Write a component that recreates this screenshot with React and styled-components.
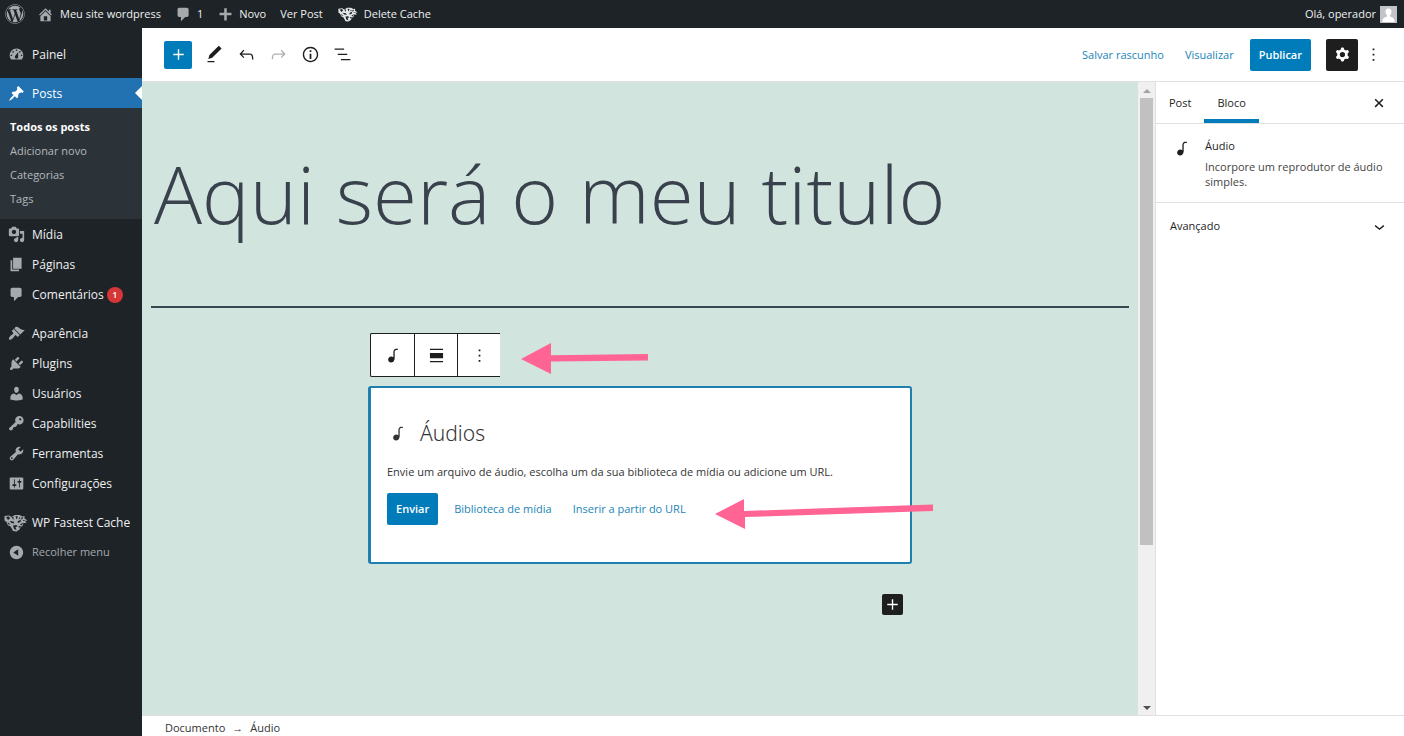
import React from "react";
import styled, { createGlobalStyle } from "styled-components";
import { FaWordpress } from "react-icons/fa";

const Global = createGlobalStyle`
  * { box-sizing: border-box; }
  body { margin: 0; background: #fff; color: #1e1e1e; font: 11px/16px "Open Sans", "Liberation Sans", sans-serif; }
  button, input { font: inherit; color: inherit; }
  button { border: 0; background: none; padding: 0; cursor: pointer; }
  a { color: inherit; text-decoration: none; }
  ul { list-style: none; margin: 0; padding: 0; }
  p, h1, h2 { margin: 0; font-weight: 400; }
  svg { display: block; flex: none; fill: currentColor; }
`;

const Page = styled.div`
  min-height: 100vh;
  display: flex;
  flex-direction: column;
`;

const AdminBar = styled.header`
  display: flex;
  align-items: center;
  height: 28px;
  padding: 0 7px 0 5px;
  background: #1d2327;
  color: #f0f0f1;
`;

const BarLink = styled.a`
  display: flex;
  align-items: center;
  gap: ${(p) => p.$gap || 6}px;
  margin-right: ${(p) => p.$after || 14}px;
  svg { color: ${(p) => (p.$bright ? "#e4e5e6" : "#a7aaad")}; }
`;

const Account = styled(BarLink)`
  margin: 0 0 0 auto;
  gap: 4px;
`;

const Avatar = styled.svg`
  background: #c3c4c7;
  && { color: #fff; }
`;

const Shell = styled.div`
  flex: 1;
  display: flex;
`;

const Sidebar = styled.nav`
  flex: none;
  width: 142px;
  padding-top: 11px;
  background: #1d2327;
  color: #f0f0f1;
  font-size: 12px;
`;

const MenuLink = styled.a`
  position: relative;
  display: flex;
  align-items: center;
  gap: ${(p) => (p.$wide ? 4 : 7)}px;
  height: 30px;
  padding: 1px 0 0 ${(p) => (p.$wide ? 4 : 8)}px;
  white-space: nowrap;
  background: ${(p) => (p.$current ? "#2271b1" : "none")};
  color: ${(p) => (p.$current ? "#fff" : "inherit")};
  svg { color: ${(p) => (p.$current ? "#fff" : "#a7aaad")}; }
  &::after {
    content: "";
    display: ${(p) => (p.$current ? "block" : "none")};
    position: absolute;
    right: 0;
    top: 8px;
    border: 7px solid transparent;
    border-left: 0;
    border-right-color: #fff;
  }
`;

const Collapse = styled.button`
  display: flex;
  align-items: center;
  gap: 7px;
  height: 30px;
  padding-left: 8px;
  font-size: 11px;
  color: #a7aaad;
`;

const MenuGap = styled.li`
  height: 9px;
`;

const SubMenu = styled.ul`
  padding: 7px 0 8px;
  background: #2c3338;
  font-size: 11px;
  color: #b4b9be;
`;

const SubLink = styled.a`
  display: block;
  padding-left: 10px;
  line-height: 24px;
  font-weight: ${(p) => (p.$current ? 700 : 400)};
  color: ${(p) => (p.$current ? "#fff" : "inherit")};
`;

const Count = styled.span`
  width: 16px;
  height: 16px;
  margin-left: -4px;
  border-radius: 8px;
  background: #d63638;
  color: #fff;
  font-size: 9px;
  font-weight: 600;
  text-align: center;
`;

const Editor = styled.div`
  flex: 1;
  min-width: 0;
  display: flex;
  flex-direction: column;
`;

const Header = styled.div`
  display: flex;
  align-items: center;
  justify-content: space-between;
  height: 54px;
  padding: 0 20px 0 22px;
  border-bottom: 1px solid #e0e0e0;
`;

const Tools = styled.div`
  display: flex;
  align-items: center;
  gap: 4px;
`;

const Tool = styled.button`
  display: grid;
  place-items: center;
  width: 28px;
  height: 28px;
  color: #1e1e1e;
  &:disabled { color: #b0b0b0; }
`;

const Inserter = styled(Tool)`
  margin-right: 4px;
  border-radius: 2px;
  background: #007cba;
  color: #fff;
`;

const Actions = styled.div`
  display: flex;
  align-items: center;
`;

const TextButton = styled.button`
  margin-right: ${(p) => p.$after || 21}px;
  color: #1a85b8;
`;

const Primary = styled.button`
  height: 32px;
  padding: 0 9px;
  border-radius: 2px;
  background: #007cba;
  color: #fff;
  font-weight: 600;
`;

const SettingsToggle = styled.button`
  display: grid;
  place-items: center;
  width: 32px;
  height: 32px;
  margin: 0 5px 0 15px;
  border-radius: 2px;
  background: #1e1e1e;
  color: #fff;
`;

const MoreButton = styled.button`
  display: grid;
  place-items: center;
  width: 21px;
  height: 28px;
`;

const Body = styled.div`
  flex: 1;
  display: flex;
`;

const Canvas = styled.main`
  flex: 1;
  min-width: 0;
  padding: 0 9px;
  background: #d1e4dd;
`;

const Title = styled.input`
  display: block;
  width: 100%;
  height: 226px;
  padding: 0 3px 4px;
  border: 0;
  border-bottom: 2px solid #39474f;
  border-radius: 0;
  outline: 0;
  background: none;
  && {
    color: #39414d;
    font-size: 80px;
    font-weight: 300;
  }
`;

const Column = styled.div`
  position: relative;
  max-width: 544px;
  margin: 25px auto 0;
`;

const BlockToolbar = styled.div`
  display: flex;
  width: max-content;
  margin-left: 2px;
  border: 1px solid #1e1e1e;
  border-right: 0;
  border-radius: 2px 0 0 2px;
  background: #fff;
`;

const BlockTool = styled.button`
  display: grid;
  place-items: center;
  width: 43px;
  height: 42px;
  & + & { border-left: 1px solid #1e1e1e; }
`;

const Placeholder = styled.section`
  margin-top: 9px;
  min-height: 178px;
  padding: 29px 16px 34px;
  border: 2px solid #1f80b0;
  border-left-width: 3px;
  border-radius: 3px;
  background: #fff;
`;

const PlaceholderTitle = styled.h2`
  display: flex;
  align-items: center;
  gap: 12px;
  color: #333;
  font: 300 21px/32px "Noto Sans", sans-serif;
`;

const Hint = styled.p`
  margin: 15px 0 13px;
  color: #333;
`;

const Row = styled.div`
  display: flex;
  align-items: center;
  gap: 16px;
`;

const Appender = styled.button`
  display: grid;
  place-items: center;
  width: 21px;
  height: 21px;
  margin: 30px 9px 0 auto;
  border-radius: 2px;
  background: #1e1e1e;
  color: #fff;
`;

const Annotation = styled.svg`
  position: absolute;
  left: ${(p) => p.$x}px;
  top: ${(p) => p.$y}px;
  color: #ff6494;
  pointer-events: none;
`;

const ScrollTrack = styled.div`
  flex: none;
  display: flex;
  flex-direction: column;
  align-items: center;
  justify-content: space-between;
  width: 17px;
  padding: 7px 0 5px;
  background: #f0f0f0;
`;

const ScrollThumb = styled.div`
  flex: 0 0 72%;
  width: 13px;
  margin: 5px 0 auto;
  background: #c1c1c1;
`;

const ScrollArrow = styled.span`
  border: 4px solid transparent;
  border-top-width: ${(p) => (p.$up ? 0 : 4)}px;
  border-bottom-width: ${(p) => (p.$up ? 4 : 0)}px;
  border-top-color: #505050;
  border-bottom-color: #a3a3a3;
`;

const Panel = styled.aside`
  flex: none;
  width: 249px;
  border-left: 1px solid #e0e0e0;
`;

const Tabs = styled.div`
  display: flex;
  align-items: center;
  height: 42px;
  padding-right: 18px;
  border-bottom: 1px solid #e0e0e0;
`;

const Tab = styled.button`
  align-self: stretch;
  padding: 0 13px;
  box-shadow: ${(p) => (p.$active ? "inset 0 -4px #007cba" : "none")};
`;

const CloseButton = styled.button`
  margin-left: auto;
`;

const BlockCard = styled.div`
  display: flex;
  gap: 13px;
  padding: 14px 14px 13px 15px;
  border-bottom: 1px solid #e0e0e0;
`;

const CardTitle = styled.h2`
  margin-bottom: 5px;
  font-size: 11px;
  line-height: 16px;
`;

const CardText = styled.p`
  color: #444;
  line-height: 15px;
`;

const PanelToggle = styled.button`
  display: flex;
  align-items: center;
  justify-content: space-between;
  width: 100%;
  height: 46px;
  padding: 0 14px;
`;

const Footer = styled.footer`
  display: flex;
  align-items: center;
  gap: 7px;
  height: 21px;
  padding: 4px 23px 0;
  border-top: 1px solid #e0e0e0;
  color: #333;
`;

const dash = {
  dashboard: "M3.76 16h12.48c1.1-1.37 1.76-3.11 1.76-5 0-4.42-3.58-8-8-8s-8 3.58-8 8c0 1.89.66 3.63 1.76 5zM10 4c.55 0 1 .45 1 1s-.45 1-1 1-1-.45-1-1 .45-1 1-1zM6 6c.55 0 1 .45 1 1s-.45 1-1 1-1-.45-1-1 .45-1 1-1zm8 0c.55 0 1 .45 1 1s-.45 1-1 1-1-.45-1-1 .45-1 1-1zm-5.37 5.55L12 7v6c0 1.1-.9 2-2 2s-2-.9-2-2c0-.57.24-1.08.63-1.45zM4 10c.55 0 1 .45 1 1s-.45 1-1 1-1-.45-1-1 .45-1 1-1zm12 0c.55 0 1 .45 1 1s-.45 1-1 1-1-.45-1-1 .45-1 1-1z",
  pin: "M10.44 3.02l1.82-1.82 6.36 6.35-1.83 1.82c-1.05-.68-2.48-.57-3.41.36l-.75.75c-.92.93-1.04 2.35-.35 3.41l-1.83 1.82-2.41-2.41-2.8 2.79c-.42.42-3.38 2.71-3.8 2.29s1.86-3.39 2.28-3.81l2.79-2.79L4.1 9.36l1.83-1.82c1.05.69 2.48.57 3.4-.36l.75-.75c.93-.92 1.05-2.35.36-3.41z",
  home: "M16 8.5l1.53 1.53-1.06 1.06L10 4.6l-6.47 6.49-1.06-1.06L10 2.5l4 4v-2h2v4zm-6-2.46l6 5.99V18H4v-5.97zM12 17v-5H8v5h4z",
  comments: "M5 2h9c1.1 0 2 .9 2 2v7c0 1.1-.9 2-2 2h-2l-5 5v-5H5c-1.1 0-2-.9-2-2V4c0-1.1.9-2 2-2z",
  plus: "M17 8v3h-5.500v6h-3v-6H3V8h5.500V2.500h3V8z",
  media: "M13 11V4c0-.55-.45-1-1-1h-1.67L9 1H5L3.67 3H2c-.55 0-1 .45-1 1v7c0 .55.45 1 1 1h10c.55 0 1-.45 1-1zM7 4.5c1.38 0 2.5 1.12 2.5 2.5S8.38 9.500 7 9.500 4.500 8.380 4.500 7 5.620 4.500 7 4.500zM14 6h5v10.500c0 1.380-1.120 2.500-2.500 2.500S14 17.880 14 16.500s1.120-2.500 2.500-2.500c.17 0 .34.02.5.05V9h-3V6zm-4 8.050V13h2v3.500c0 1.380-1.120 2.500-2.500 2.500S7 17.880 7 16.500 8.120 14 9.500 14c.17 0 .34.02.5.05z",
  page: "M6 15V2h10v13H6zm-1 1h8v2H3V5h2v11z",
  appearance: "M14.48 11.06L7.41 3.99l1.5-1.5c.5-.56 2.3-.47 3.51.32 1.21.8 1.43 1.28 2.91 2.1 1.18.64 2.45 1.26 4.45.85zm-.71.71L6.7 4.7 4.93 6.47c-.39.39-.39 1.02 0 1.41l1.06 1.06c.39.39.39 1.03 0 1.42-.6.6-1.43 1.11-2.21 1.69-.35.26-.7.53-1.01.84C1.43 14.23.4 16.08 1.4 17.07c.99 1 2.84-.03 4.18-1.36.31-.31.58-.66.85-1.02.57-.78 1.08-1.61 1.69-2.21.39-.39 1.02-.39 1.41 0l1.06 1.06c.39.39 1.02.39 1.41 0z",
  plugins: "M13.11 4.36L9.87 7.6 8 5.73l3.24-3.24c.35-.34 1.05-.2 1.56.32.52.51.66 1.21.31 1.55zm-8 1.77l.91-1.12 9.01 9.01-1.19.84c-.71.71-2.63 1.16-3.82 1.16H6.14L4.9 17.26c-.59.59-1.54.59-2.12 0-.59-.58-.59-1.53 0-2.12l1.24-1.24v-3.88c0-1.13.4-3.19 1.09-3.89zm7.26 3.97l3.24-3.24c.34-.35 1.04-.21 1.55.31.52.51.66 1.21.31 1.55l-3.24 3.25z",
  users: "M10 9.25c-2.27 0-2.73-3.44-2.73-3.44C7 4.02 7.82 2 9.97 2c2.16 0 2.98 2.02 2.71 3.81 0 0-.41 3.44-2.68 3.44zm0 2.57L12.72 10c2.39 0 4.52 2.33 4.52 4.53v2.49s-3.65 1.13-7.24 1.13c-3.65 0-7.24-1.13-7.24-1.13v-2.49c0-2.25 1.94-4.48 4.47-4.48z",
  key: "M16.95 2.58c1.96 1.95 1.96 5.12 0 7.07-1.51 1.51-3.75 1.84-5.59 1.01l-1.87 3.31-2.99.31L5 18H2l-1-2 7.95-7.69c-.92-1.87-.62-4.18.93-5.73 1.95-1.96 5.12-1.96 7.07 0zm-2.51 3.79c.74 0 1.33-.6 1.33-1.34 0-.73-.59-1.33-1.33-1.33-.73 0-1.33.6-1.33 1.33 0 .74.6 1.34 1.33 1.34z",
  tools: "M16.68 9.77c-1.34 1.34-3.3 1.67-4.95.99l-5.41 6.52c-.99.99-2.59.99-3.58 0s-.99-2.59 0-3.57l6.52-5.42c-.68-1.65-.35-3.61.99-4.95 1.28-1.28 3.12-1.62 4.72-1.06l-2.89 2.89 2.82 2.82 2.86-2.87c.53 1.58.18 3.39-1.08 4.65zM3.81 16.21c.4.39 1.04.39 1.43 0 .4-.4.4-1.04 0-1.43-.39-.4-1.03-.4-1.43 0-.39.39-.39 1.03 0 1.43z",
  sliders: "M18 16V4c0-.55-.45-1-1-1H3c-.55 0-1 .45-1 1v12c0 .55.45 1 1 1h14c.55 0 1-.45 1-1zM8 11h1c.55 0 1 .45 1 1s-.45 1-1 1H8v1.5c0 .28-.22.5-.5.5s-.5-.22-.5-.5V13H6c-.55 0-1-.45-1-1s.45-1 1-1h1V5.5c0-.28.22-.5.5-.5s.5.22.5.5V11zm5-2h-1c-.55 0-1-.45-1-1s.45-1 1-1h1V5.5c0-.28.22-.5.5-.5s.5.22.5.5V7h1c.55 0 1 .45 1 1s-.45 1-1 1h-1v5.5c0 .28-.22.5-.5.5s-.5-.22-.5-.5V9z",
  collapse: "M10 2.16c4.33 0 7.84 3.51 7.84 7.84s-3.51 7.84-7.84 7.84S2.16 14.33 2.16 10 5.71 2.16 10 2.16zm2 11.72V6.12L6.18 9.97z",
};

const glyph = {
  plus: "M18 11.2h-5.2V6h-1.6v5.2H6v1.6h5.2V18h1.6v-5.2H18z",
  edit: "M20.1 5.1L16.9 2 6.2 12.7l-1.3 4.4 4.5-1.3L20.1 5.1zM4 20.8h8v-1.5H4v1.5z",
  undo: "M18.3 11.7c-.6-.6-1.4-.9-2.3-.9H6.7l2.9-3.3-1.1-1-4.5 5L8.5 16l1-1-2.7-2.7H16c.5 0 .9.2 1.3.5 1 1 1 3.4 1 4.5v.3h1.5v-.2c0-1.5 0-4.3-1.5-5.7z",
  redo: "M15.6 6.5l-1.1 1 2.9 3.3H8c-.9 0-1.7.3-2.3.9-1.4 1.500-1.400 4.200-1.400 5.600v.2h1.500v-.3c0-1.100 0-3.500 1-4.500.3-.3.7-.5 1.300-.5h9.200L14.500 15l1.100 1.100 4.600-4.600-4.600-5z",
  info: "M12 3.2c-4.8 0-8.8 3.9-8.8 8.8 0 4.8 3.9 8.8 8.8 8.8 4.8 0 8.8-3.9 8.8-8.8 0-4.8-4-8.8-8.8-8.8zm0 16c-4 0-7.2-3.3-7.2-7.2C4.8 8 8 4.8 12 4.8s7.2 3.300 7.200 7.200c0 4-3.200 7.200-7.200 7.200zM11 17h2v-6h-2v6zm0-8h2V7h-2v2z",
  list: "M13.8 5.2H3v1.5h10.8V5.2zm-3.600 12v1.500H21v-1.500H10.200zm7.200-6H6.600v1.500h10.800v-1.500z",
  cog: "M10.289 4.836A1 1 0 0111.275 4h1.306a1 1 0 01.987.836l.244 1.466c.787.26 1.503.679 2.108 1.218l1.393-.522a1 1 0 011.216.437l.653 1.13a1 1 0 01-.23 1.273l-1.148.944a6.025 6.025 0 010 2.435l1.149.946a1 1 0 01.23 1.272l-.653 1.13a1 1 0 01-1.216.437l-1.394-.522c-.605.54-1.32.958-2.108 1.218l-.244 1.466a1 1 0 01-.987.836h-1.306a1 1 0 01-.986-.836l-.244-1.466a5.995 5.995 0 01-2.108-1.218l-1.394.522a1 1 0 01-1.217-.436l-.653-1.131a1 1 0 01.23-1.272l1.149-.946a6.026 6.026 0 010-2.435l-1.148-.944a1 1 0 01-.23-1.272l.653-1.131a1 1 0 011.217-.437l1.393.522a5.994 5.994 0 012.108-1.218l.244-1.466zM14.929 12a3 3 0 11-6 0 3 3 0 016 0z",
  more: "M13 19h-2v-2h2v2zm0-6h-2v-2h2v2zm0-6h-2V5h2v2z",
  audio: "M17.7 4.3c-1.2 0-2.8 0-3.8 1-.6.6-.9 1.5-.9 2.6V14c-.6-.6-1.5-1-2.5-1C8.6 13 7 14.6 7 16.5S8.6 20 10.5 20c1.5 0 2.8-1 3.3-2.3.5-.8.7-1.8.7-2.5V7.9c0-.7.2-1.2.5-1.6.6-.6 1.8-.6 2.8-.6h.3V4.3h-.4z",
  align: "M4.500 15h15V9h-15v6zm0 4.800h15v-1.500h-15v1.500zM4.500 4.200v1.500h15V4.200h-15z",
  close: "M12 13.800l5.600 5.700 1.900-1.900-5.700-5.600 5.700-5.600-1.900-1.900-5.600 5.700-5.600-5.700-1.900 1.900 5.700 5.600-5.700 5.600 1.900 1.900z",
  chevron: "M17.5 11.6L12 16l-5.5-4.4.9-1.200L12 14l4.500-3.600 1 1.200z",
};

const Dash = ({ name, size = 17 }) => (
  <svg width={size} height={size} viewBox="0 0 20 20" fillRule="evenodd" aria-hidden="true">
    <path d={dash[name]} />
  </svg>
);

const Glyph = ({ name, size = 21 }) => (
  <svg width={size} height={size} viewBox="0 0 24 24" fillRule="evenodd" aria-hidden="true">
    <path d={glyph[name]} />
  </svg>
);

const Tiger = ({ width = 24, height = 18 }) => (
  <svg width={width} height={height} viewBox="0 0 48 36" aria-hidden="true">
    <path d="M1 4l9-1 5 3 7-4 9 0 6 3 4-1 0 5 6 4-5 1 3 4-6 0-2 6-4 2-2 5-6 4-7-1-3-6-3-4-4-1-3-7-4-3z" />
    <g fill="#1d2327">
      <path d="M4 6l6-1 2 4-4 3z" />
      <path d="M35 7l3-1-1 4-3 1z" />
      <path d="M11 14l8 1 2 4-6-1z" />
      <path d="M27 15l7-4-1 5-5 2z" />
      <path d="M18 23l7-1 2 3-4 1 2 6-5-2z" />
      <path d="M15 6l4 6 0-6zM23 4l2 7 3-6zM31 6l-2 5 4-3z" />
      <path d="M7 16l6 5-4 0zM32 21l7-4-4 6zM29 24l5 0-4 4z" />
      <path d="M38 12l6 1-6 1z" />
    </g>
  </svg>
);

const Arrow = ({ x, y, width, height, d }) => (
  <Annotation $x={x} $y={y} width={width} height={height} viewBox={`0 0 ${width} ${height}`} aria-hidden="true">
    <path d={d} />
  </Annotation>
);

const MenuItem = ({ icon, label, current, count, children }) => (
  <li>
    <MenuLink href="#" $current={current} aria-current={current ? "page" : undefined}>
      <Dash name={icon} />
      {label}
      {count && <Count>{count}</Count>}
    </MenuLink>
    {children}
  </li>
);

const submenu = ["Todos os posts", "Adicionar novo", "Categorias", "Tags"];

export default function App() {
  return (
    <Page>
      <Global />
      <AdminBar>
        <BarLink href="#" $after={12} aria-label="WordPress"><FaWordpress size={20} /></BarLink>
        <BarLink href="#"><Dash name="home" />Meu site wordpress</BarLink>
        <BarLink href="#" $gap={5}><Dash name="comments" />1</BarLink>
        <BarLink href="#" $gap={5}><Dash name="plus" />Novo</BarLink>
        <BarLink href="#" $after={15}>Ver Post</BarLink>
        <BarLink href="#" $bright><Tiger width={20} height={15} />Delete Cache</BarLink>
        <Account href="#">
          Olá, operador
          <Avatar width="17" height="17" viewBox="0 0 17 17" aria-hidden="true">
            <path d="M8.500 2.500c2.200 0 3.200 1.500 3 3.500-.2 1.600-.8 2.600-1.500 3.300v1.200c2 .6 4 1.500 4.500 3.500v2h-12v-2c.5-2 2.500-2.900 4.500-3.500V9.300C6.300 8.600 5.700 7.600 5.500 6c-.2-2 .8-3.500 3-3.500z" />
          </Avatar>
        </Account>
      </AdminBar>
      <Shell>
        <Sidebar aria-label="Menu principal">
          <ul>
            <MenuItem icon="dashboard" label="Painel" />
            <MenuGap />
            <MenuItem icon="pin" label="Posts" current>
              <SubMenu>
                {submenu.map((label, i) => (
                  <li key={label}><SubLink href="#" $current={i === 0}>{label}</SubLink></li>
                ))}
              </SubMenu>
            </MenuItem>
            <MenuItem icon="media" label="Mídia" />
            <MenuItem icon="page" label="Páginas" />
            <MenuItem icon="comments" label="Comentários" count={1} />
            <MenuGap />
            <MenuItem icon="appearance" label="Aparência" />
            <MenuItem icon="plugins" label="Plugins" />
            <MenuItem icon="users" label="Usuários" />
            <MenuItem icon="key" label="Capabilities" />
            <MenuItem icon="tools" label="Ferramentas" />
            <MenuItem icon="sliders" label="Configurações" />
            <MenuGap />
            <li><MenuLink href="#" $wide><Tiger />WP Fastest Cache</MenuLink></li>
            <li><Collapse><Dash name="collapse" />Recolher menu</Collapse></li>
          </ul>
        </Sidebar>
        <Editor>
          <Header>
            <Tools>
              <Inserter aria-label="Adicionar bloco"><Glyph name="plus" /></Inserter>
              <Tool aria-label="Editar"><Glyph name="edit" /></Tool>
              <Tool aria-label="Desfazer"><Glyph name="undo" /></Tool>
              <Tool aria-label="Refazer" disabled><Glyph name="redo" /></Tool>
              <Tool aria-label="Detalhes"><Glyph name="info" /></Tool>
              <Tool aria-label="Lista de blocos"><Glyph name="list" /></Tool>
            </Tools>
            <Actions>
              <TextButton>Salvar rascunho</TextButton>
              <TextButton $after={16}>Visualizar</TextButton>
              <Primary>Publicar</Primary>
              <SettingsToggle aria-label="Configurações"><Glyph name="cog" /></SettingsToggle>
              <MoreButton aria-label="Opções"><Glyph name="more" /></MoreButton>
            </Actions>
          </Header>
          <Body>
            <Canvas>
              <Title aria-label="Título" defaultValue="Aqui será o meu titulo" />
              <Column>
                <BlockToolbar role="toolbar">
                  <BlockTool aria-label="Áudio"><Glyph name="audio" /></BlockTool>
                  <BlockTool aria-label="Alinhamento"><Glyph name="align" /></BlockTool>
                  <BlockTool aria-label="Mais opções"><Glyph name="more" /></BlockTool>
                </BlockToolbar>
                <Placeholder>
                  <PlaceholderTitle><Glyph name="audio" />Áudios</PlaceholderTitle>
                  <Hint>Envie um arquivo de áudio, escolha um da sua biblioteca de mídia ou adicione um URL.</Hint>
                  <Row>
                    <Primary>Enviar</Primary>
                    <TextButton $after={5}>Biblioteca de mídia</TextButton>
                    <TextButton>Inserir a partir do URL</TextButton>
                  </Row>
                </Placeholder>
                <Appender aria-label="Adicionar bloco"><Glyph name="plus" size={21} /></Appender>
                <Arrow x={153} y={10} width={127} height={31} d="M0 16L30 0v12.300L127 11v6.500L30 18.500V31z" />
                <Arrow x={347} y={164} width={218} height={32} d="M0 17L29 2v12L218 7.500v6.500L30 20v12z" />
              </Column>
            </Canvas>
            <ScrollTrack aria-hidden="true">
              <ScrollArrow $up />
              <ScrollThumb />
              <ScrollArrow />
            </ScrollTrack>
            <Panel>
              <Tabs>
                <Tab>Post</Tab>
                <Tab $active>Bloco</Tab>
                <CloseButton aria-label="Fechar"><Glyph name="close" size={14} /></CloseButton>
              </Tabs>
              <BlockCard>
                <Glyph name="audio" />
                <div>
                  <CardTitle>Áudio</CardTitle>
                  <CardText>Incorpore um reprodutor de áudio simples.</CardText>
                </div>
              </BlockCard>
              <PanelToggle>Avançado<Glyph name="chevron" /></PanelToggle>
            </Panel>
          </Body>
          <Footer><span>Documento</span><span>→</span><span>Áudio</span></Footer>
        </Editor>
      </Shell>
    </Page>
  );
}
